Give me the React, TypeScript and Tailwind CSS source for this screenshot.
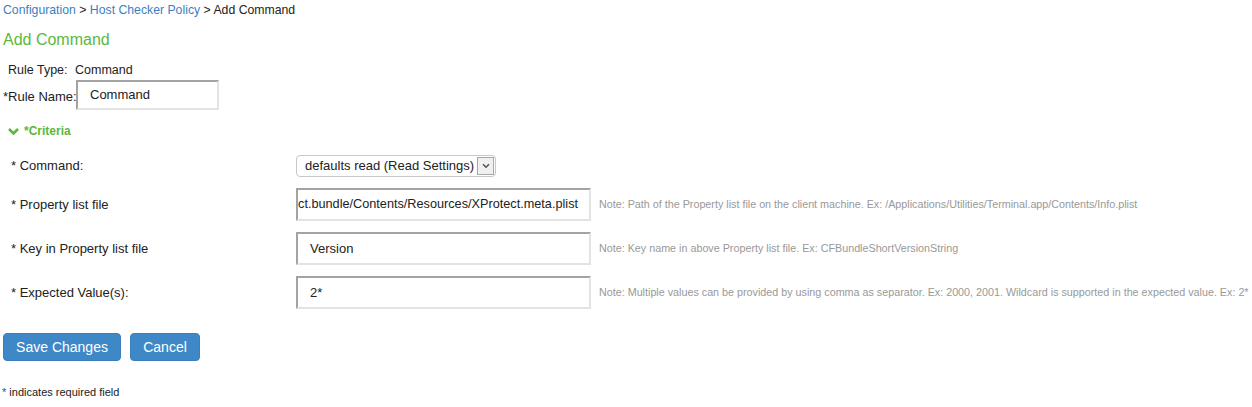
import React from 'react';

const FONT = '"Liberation Sans", Arial, sans-serif';

const inputBase =
  'shrink-0 h-full bg-white border-2 border-t-[#a3a3a3] border-l-[#a3a3a3] border-r-[#e3e3e3] border-b-[#e3e3e3] text-[#222] flex items-center overflow-hidden whitespace-nowrap';
const inputBox = inputBase + ' text-[13px]';

function Row({ label, top, children, note }: { label: string; top: number; children: React.ReactNode; note?: string }) {
  return (
    <div className="flex items-center" style={{ height: top }}>
      <div className="shrink-0 w-[296px] pl-[11px] text-[13px] text-[#222]">{label}</div>
      {children}
      {note && <div className="shrink-0 ml-[8px] text-[10.75px] text-[#999] whitespace-nowrap">{note}</div>}
    </div>
  );
}

export default function App() {
  return (
    <div className="w-[1252px] h-[407px] bg-white relative overflow-hidden" style={{ fontFamily: FONT }}>
      <div className="pl-[3px] pt-[2px] h-[20px] text-[12.25px] leading-[16px] text-[#222]">
        <span className="text-[#3a7fc6]">Configuration</span> &gt;{' '}
        <span className="text-[#3a7fc6]">Host Checker Policy</span> &gt; Add Command
      </div>
      <div className="pl-[3px] mt-[10px] h-[20px] text-[16px] leading-[20px] text-[#5cb83a]">Add Command</div>
      <div className="pl-[8px] mt-[12px] h-[16px] text-[12.5px] leading-[16px] text-[#222] flex">
        <span className="w-[67px]">Rule Type:</span>
        <span>Command</span>
      </div>
      <div className="flex items-center pl-[3px] mt-[2px] h-[30px]">
        <span className="shrink-0 whitespace-nowrap text-[13px] text-[#222] pt-[4px] w-[73px]">*Rule Name:</span>
        <div className={inputBox + ' w-[143px] pl-[12px]'}>Command</div>
      </div>
      <div className="flex items-center pl-[8px] mt-[12px] h-[18px] text-[12px] font-bold text-[#5cb83a]">
        <svg width="11" height="9" viewBox="0 0 11 9" className="mr-[5px]">
          <path d="M1 2 L5.5 6.5 L10 2" fill="none" stroke="#5cb83a" strokeWidth="2.6" />
        </svg>
        *Criteria
      </div>
      <div className="mt-[15px]">
        <Row label="* Command:" top={22}>
          <div className="shrink-0 w-[200px] h-[22px] border border-[#c8c8c8] rounded-[4px] flex items-center pl-[8px] pr-[1px] text-[13px] text-[#222] bg-white">
            <span className="flex-1 whitespace-nowrap">defaults read (Read Settings)</span>
            <div className="w-[17px] h-[18px] border border-[#a8a8a8] bg-[#f0f0f0] flex items-center justify-center">
              <svg width="8" height="6" viewBox="0 0 8 6">
                <path d="M1 1.2 L4 4.2 L7 1.2" fill="none" stroke="#555" strokeWidth="1.6" />
              </svg>
            </div>
          </div>
        </Row>
        <div className="h-[11px]" />
        <Row
          label="* Property list file"
          top={33}
          note="Note: Path of the Property list file on the client machine. Ex: /Applications/Utilities/Terminal.app/Contents/Info.plist"
        >
          <div className={inputBase + ' text-[12.7px] w-[295px] justify-end pr-[11px]'}>
            ct.bundle/Contents/Resources/XProtect.meta.plist
          </div>
        </Row>
        <div className="h-[11px]" />
        <Row label="* Key in Property list file" top={33} note="Note: Key name in above Property list file. Ex: CFBundleShortVersionString">
          <div className={inputBox + ' w-[295px] pl-[12px]'}>Version</div>
        </Row>
        <div className="h-[11px]" />
        <Row
          label="* Expected Value(s):"
          top={33}
          note="Note: Multiple values can be provided by using comma as separator. Ex: 2000, 2001. Wildcard is supported in the expected value. Ex: 2*"
        >
          <div className={inputBox + ' w-[295px] pl-[12px]'}>2*</div>
        </Row>
      </div>
      <div className="flex gap-[9px] pl-[3px] mt-[24px]">
        <button className="h-[28px] w-[118px] rounded-[4px] bg-[#3f88c8] border border-[#3a7fbd] text-white text-[14px]">
          Save Changes
        </button>
        <button className="h-[28px] w-[70px] rounded-[4px] bg-[#3f88c8] border border-[#3a7fbd] text-white text-[14px]">
          Cancel
        </button>
      </div>
      <div className="pl-[2px] mt-[23px] text-[11px] text-[#222]">
        <span className="text-[#2255aa]">*</span> indicates required field
      </div>
    </div>
  );
}
